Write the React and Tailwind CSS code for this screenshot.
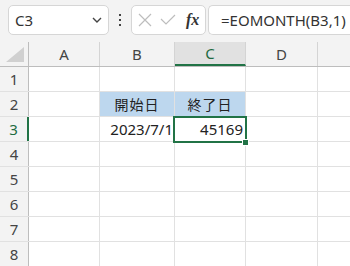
import React from "react";

const font = { fontFamily: '"Noto Sans", "Noto Sans CJK JP", sans-serif' };

function HeaderCell({ w, label, active }) {
  return (
    <div
      className={`${w} h-full flex items-center justify-center border-r border-[#d4d4d4] text-[15px] ${
        active ? "bg-[#e1e1e1] text-[#1e6b41] border-b-2 border-b-[#217346]" : "text-[#444]"
      }`}
    >
      {label}
    </div>
  );
}

function Row({ n, active, cells }) {
  return (
    <div className="flex h-[25px] border-b border-[#e1e1e1]">
      <div
        className={`w-[29px] shrink-0 flex items-center justify-center text-[15px] bg-[#f3f3f3] ${
          active ? "text-[#1e6b41] border-r-2 border-[#217346] bg-[#e6e6e6]" : "text-[#444] border-r border-[#bdbdbd]"
        }`}
      >
        {n}
      </div>
      <div className="w-[71px] shrink-0 border-r border-[#e1e1e1]" />
      {cells}
      <div className="w-[72px] shrink-0 border-r border-[#e1e1e1]" />
      <div className="flex-1" />
    </div>
  );
}

function Empty() {
  return (
    <>
      <div className="w-[75px] shrink-0 border-r border-[#e1e1e1]" />
      <div className="w-[71px] shrink-0 border-r border-[#e1e1e1]" />
    </>
  );
}

export default function App() {
  return (
    <div className="w-[350px] h-[266px] overflow-hidden bg-white" style={font}>
      {/* toolbar */}
      <div className="h-[42px] bg-[#f3f3f3] flex items-start pt-[5px]">
        <div className="ml-[8px] w-[101px] h-[30px] bg-white border border-[#d6d6d6] rounded-[5px] flex items-center pl-[6px] pr-[6px]">
          <span className="text-[15px] text-[#333] flex-1">C3</span>
          <svg width="10" height="6" viewBox="0 0 10 6">
            <path d="M1 1 L5 5 L9 1" fill="none" stroke="#444" strokeWidth="1.4" />
          </svg>
        </div>
        <div className="w-[22px] h-[30px] flex flex-col items-center justify-center gap-[3px]">
          <div className="w-[2px] h-[2px] bg-[#444]" />
          <div className="w-[2px] h-[2px] bg-[#444]" />
          <div className="w-[2px] h-[2px] bg-[#444]" />
        </div>
        <div className="w-[75px] h-[30px] bg-white border border-[#d6d6d6] rounded-[5px] flex items-center pl-[5px]">
          <svg width="14" height="14" viewBox="0 0 14 14" className="ml-[1px]">
            <path d="M1 1 L13 13 M13 1 L1 13" stroke="#bdbdbd" strokeWidth="1.2" fill="none" />
          </svg>
          <svg width="16" height="12" viewBox="0 0 16 12" className="ml-[8px]">
            <path d="M1 5 L6 10 L15 1" stroke="#bdbdbd" strokeWidth="1.2" fill="none" />
          </svg>
          <span
            className="ml-[10px] text-[16px] italic text-[#333] font-bold"
            style={{ fontFamily: '"Liberation Serif", serif' }}
          >
            fx
          </span>
        </div>
        <div className="ml-[2px] flex-1 h-[30px] bg-white border border-[#d6d6d6] border-r-0 rounded-l-[5px] flex items-center pl-[12px]">
          <span className="text-[15px] text-[#333] whitespace-nowrap">=EOMONTH(B3,1)</span>
        </div>
      </div>

      {/* column header */}
      <div className="flex h-[25px] bg-[#f3f3f3] border-b border-[#bdbdbd]">
        <div className="w-[29px] shrink-0 border-r border-[#bdbdbd] relative">
          <svg width="20" height="16" viewBox="0 0 20 16" className="absolute right-[3px] bottom-[3px]">
            <polygon points="19,0 19,15 1,15" fill="#d0d0d0" />
          </svg>
        </div>
        <HeaderCell w="w-[71px] shrink-0" label="A" />
        <HeaderCell w="w-[75px] shrink-0" label="B" />
        <HeaderCell w="w-[71px] shrink-0" label="C" active />
        <HeaderCell w="w-[72px] shrink-0" label="D" />
        <div className="flex-1" />
      </div>

      <Row n="1" cells={<Empty />} />
      <Row
        n="2"
        cells={
          <>
            <div className="w-[75px] shrink-0 border-r border-[#e1e1e1] bg-[#bdd7ee] flex items-center justify-center text-[14px] text-[#222] tracking-[1px]">
              開始日
            </div>
            <div className="w-[71px] shrink-0 border-r border-[#e1e1e1] bg-[#bdd7ee] flex items-center justify-center text-[14px] text-[#222] tracking-[1px]">
              終了日
            </div>
          </>
        }
      />
      <Row
        n="3"
        active
        cells={
          <>
            <div className="w-[75px] shrink-0 border-r border-[#e1e1e1] flex items-center justify-end pr-[1px] text-[15px] text-[#222]">
              2023/7/1
            </div>
            <div className="w-[71px] shrink-0 border-r border-[#e1e1e1] flex items-center justify-end pr-[2px] text-[15px] text-[#222] relative">
              45169
              <div className="absolute left-[-2px] top-[-1px] w-[74px] h-[27px] border-2 border-[#217346]" />
              <div className="absolute right-[-4px] bottom-[-5px] w-[7px] h-[7px] bg-[#217346] border border-white" />
            </div>
          </>
        }
      />
      <Row n="4" cells={<Empty />} />
      <Row n="5" cells={<Empty />} />
      <Row n="6" cells={<Empty />} />
      <Row n="7" cells={<Empty />} />
      <Row n="8" cells={<Empty />} />
    </div>
  );
}
